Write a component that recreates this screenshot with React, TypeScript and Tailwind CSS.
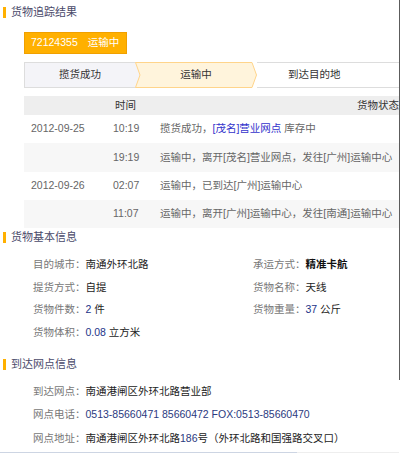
import React from "react";

const font = { fontFamily: '"Liberation Sans", "Noto Sans CJK SC", sans-serif' };

function SectionTitle({ text }: { text: string }) {
  return (
    <div className="flex h-[16px] items-center">
      <div className="ml-[3px] h-[11px] w-[3px] bg-[#ffb000]" />
      <span className="ml-[5px] text-[11px] text-[#4a4a6a]">{text}</span>
    </div>
  );
}

const rows = [
  { date: "2012-09-25", time: "10:19", bg: "bg-white", status: (
    <>揽货成功，<span className="text-[#3333cc]">[茂名]营业网点</span> 库存中</>
  ) },
  { date: "", time: "19:19", bg: "bg-[#f7f7f7]", status: <>运输中，离开[茂名]营业网点，发往[广州]运输中心</> },
  { date: "2012-09-26", time: "02:07", bg: "bg-white", status: <>运输中，已到达[广州]运输中心</> },
  { date: "", time: "11:07", bg: "bg-[#f7f7f7]", status: <>运输中，离开[广州]运输中心，发往[南通]运输中心</> },
];

function Info({ label, children, w }: { label: string; children: React.ReactNode; w?: string }) {
  return (
    <div className={`flex items-center whitespace-nowrap ${w ?? ""}`}>
      <span className="text-[#777]">{label}：</span>
      <span className="text-[#222]">{children}</span>
    </div>
  );
}

export default function App() {
  return (
    <div className="flex w-[400px] bg-white text-[10.5px]" style={font}>
      <div className="w-[399px] overflow-hidden pt-[4px]">
        <SectionTitle text="货物追踪结果" />

        <div className="ml-[24px] mt-[12px] flex h-[22px] w-[103px] items-center whitespace-nowrap border border-[#f0a000] bg-[#ffb000] pl-[6px] text-white">
          <span>72124355</span>
          <span className="ml-[10px]">运输中</span>
        </div>

        <div className="ml-[24px] mt-[8px] flex h-[26px] whitespace-nowrap text-[#333]">
          <div className="flex w-[111px] items-center justify-center border-y border-l border-[#dddddd] bg-[#f4f4f8]">
            揽货成功
          </div>
          <div className="relative flex w-[122px] items-center justify-center">
            <svg className="absolute inset-0" width="122" height="26" viewBox="0 0 122 26">
              <polygon points="0,0 5.5,13 0,26" fill="#f4f4f8" />
              <line x1="0" y1="0.5" x2="3" y2="0.5" stroke="#dddddd" />
              <line x1="0" y1="25.5" x2="3" y2="25.5" stroke="#dddddd" />
              <rect x="117" y="0" width="5" height="26" fill="white" />
              <polygon points="0.5,0.5 117,0.5 121.5,13 117,25.5 0.5,25.5 5,13" fill="#fff4dc" stroke="#ffd48a" />
            </svg>
            <span className="relative">运输中</span>
          </div>
          <div className="flex flex-1 items-center border-y border-[#dddddd] pl-[31px]">到达目的地</div>
        </div>

        <div className="ml-[24px] mt-[8px]">
          <div className="flex h-[19px] items-center whitespace-nowrap bg-[#eeeeee] text-[#333]">
            <span className="w-[337px] pl-[91px]">时间</span>
            <span>货物状态</span>
          </div>
          {rows.map((r, i) => (
            <div key={i} className={`flex h-[28.25px] items-center whitespace-nowrap text-[#666] ${r.bg}`}>
              <span className="w-[89px] pl-[7px]">{r.date}</span>
              <span className="w-[47px]">{r.time}</span>
              <span>{r.status}</span>
            </div>
          ))}
        </div>

        <div className="mt-[1px]">
          <SectionTitle text="货物基本信息" />
        </div>
        <div className="mt-[9px] pl-[33px]">
          <div className="flex h-[22.5px]">
            <Info label="目的城市" w="w-[220px]">南通外环北路</Info>
            <Info label="承运方式"><span className="font-bold text-[#111]">精准卡航</span></Info>
          </div>
          <div className="flex h-[22.5px]">
            <Info label="提货方式" w="w-[220px]">自提</Info>
            <Info label="货物名称">天线</Info>
          </div>
          <div className="flex h-[22.5px]">
            <Info label="货物件数" w="w-[220px]"><span className="text-[#223388]">2</span> 件</Info>
            <Info label="货物重量"><span className="text-[#223388]">37</span> 公斤</Info>
          </div>
          <div className="flex h-[22.5px]">
            <Info label="货物体积" w="w-[220px]"><span className="text-[#223388]">0.08</span> 立方米</Info>
          </div>
        </div>

        <div className="mt-[12px]">
          <SectionTitle text="到达网点信息" />
        </div>
        <div className="mt-[8px] pl-[33px]">
          <div className="flex h-[23.5px]">
            <Info label="到达网点">南通港闸区外环北路营业部</Info>
          </div>
          <div className="flex h-[23.5px]">
            <Info label="网点电话"><span className="text-[#2b3a80]">0513-85660471 85660472 FOX:0513-85660470</span></Info>
          </div>
          <div className="flex h-[23.5px]">
            <Info label="网点地址">南通港闸区外环北路<span className="text-[#2b3a80]">186</span>号（外环北路和国强路交叉口）</Info>
          </div>
        </div>
        <div className="mt-[1px] flex h-px">
          <div className="w-[297px] bg-[#cdd5e3]" />
          <div className="flex-1 bg-[#eeeeee]" />
        </div>
      </div>
      <div className="h-[380px] w-px bg-[#5c5c5c]" />
    </div>
  );
}
